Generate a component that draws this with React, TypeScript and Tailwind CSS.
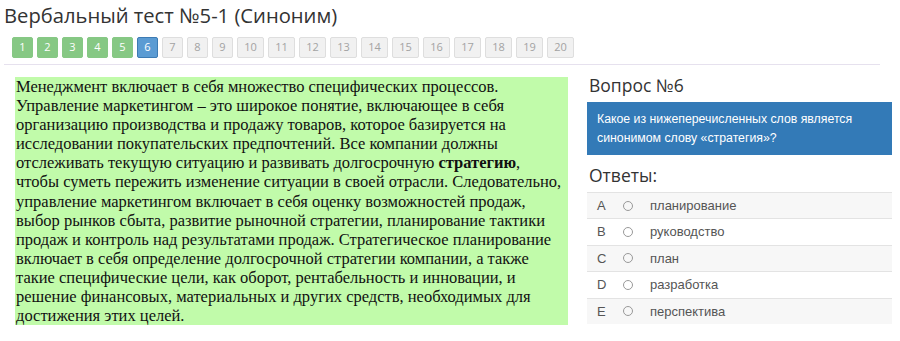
const pages = Array.from({ length: 20 }, (_, i) => i + 1)

const passage: React.ReactNode[] = [
  'Менеджмент включает в себя множество специфических процессов.',
  'Управление маркетингом – это широкое понятие, включающее в себя',
  'организацию производства и продажу товаров, которое базируется на',
  'исследовании покупательских предпочтений. Все компании должны',
  <>
    отслеживать текущую ситуацию и развивать долгосрочную <b>стратегию</b>,
  </>,
  'чтобы суметь пережить изменение ситуации в своей отрасли. Следовательно,',
  'управление маркетингом включает в себя оценку возможностей продаж,',
  'выбор рынков сбыта, развитие рыночной стратегии, планирование тактики',
  'продаж и контроль над результатами продаж. Стратегическое планирование',
  'включает в себя определение долгосрочной стратегии компании, а также',
  'такие специфические цели, как оборот, рентабельность и инновации, и',
  'решение финансовых, материальных и других средств, необходимых для',
  'достижения этих целей.',
]

const answers = [
  { key: 'A', text: 'планирование' },
  { key: 'B', text: 'руководство' },
  { key: 'C', text: 'план' },
  { key: 'D', text: 'разработка' },
  { key: 'E', text: 'перспектива' },
]

function PageButton({ n }: { n: number }) {
  const done = n < 6
  const current = n === 6
  return (
    <span
      className={
        'h-[21px] flex items-center justify-center rounded-[2px] border text-[11px] ' +
        (n < 10 ? 'w-[21px] ' : 'w-[27px] ') +
        (current
          ? 'bg-[#5b9bd3] border-[#3d7bb3] text-white'
          : done
            ? 'bg-[#86c884] border-[#86c884] text-white'
            : 'bg-[#f1f1f1] border-[#dedede] text-[#a3a3a3]')
      }
    >
      {n}
    </span>
  )
}

export default function App() {
  return (
    <div className="w-[900px] h-[341px] overflow-hidden bg-white text-[#333] font-['Open_Sans',sans-serif]">
      <h1 className="pl-[4px] pt-[2px] text-[20.2px] leading-[26px] font-normal">
        Вербальный тест №5-1 (Синоним)
      </h1>

      <div className="flex gap-[4px] pl-[12px] mt-[9px]">
        {pages.map((n) => (
          <PageButton key={n} n={n} />
        ))}
      </div>

      <div className="ml-[4px] w-[876px] mt-[6px] border-t border-[#e6e1ee]" />

      <div className="flex pl-[15px] pt-[12px]">
        <div className="w-[553px] bg-[#c1fbaa] pl-[1px] font-['Liberation_Serif',serif] text-[16.5px] leading-[19.1px] text-[#111] whitespace-nowrap">
          {passage.map((line, i) => (
            <div key={i}>{line}</div>
          ))}
        </div>

        <div className="ml-[19px] w-[305px]">
          <h2 className="pl-[2px] text-[17.5px] leading-[22px] mt-[-3px] font-normal">Вопрос №6</h2>
          <div className="mt-[6px] bg-[#337ab7] text-white px-[10px] pt-[8px] pb-[7px] text-[12.3px] leading-[19px] font-['Liberation_Sans',Arial,sans-serif]">
            Какое из нижеперечисленных слов является
            <br />
            синонимом слову «стратегия»?
          </div>
          <h2 className="pl-[2px] mt-[9px] text-[17.5px] leading-[22px] font-normal">Ответы:</h2>
          <div className="mt-[6px] font-['Liberation_Sans',Arial,sans-serif] text-[13px] text-[#555]">
            {answers.map((a, i) => (
              <div
                key={a.key}
                className={
                  'h-[26.4px] flex items-center border-t border-[#e3e3e3] ' +
                  (i % 2 === 0 ? 'bg-[#f7f7f7]' : 'bg-white')
                }
              >
                <span className="w-[10px] ml-[10px]">{a.key}</span>
                <span className="ml-[16px] w-[10px] h-[10px] rounded-full border border-[#999]" />
                <span className="ml-[17px]">{a.text}</span>
              </div>
            ))}
          </div>
        </div>
      </div>
    </div>
  )
}
